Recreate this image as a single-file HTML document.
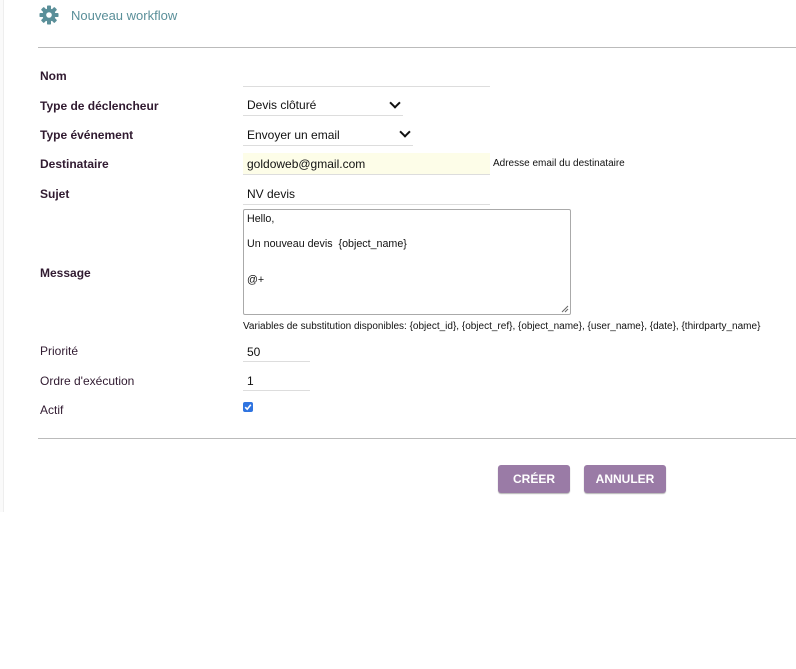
<!DOCTYPE html>
<html><head><meta charset="utf-8"><style>
body{margin:0;width:796px;height:669px;background:#fff;font-family:"Liberation Sans",sans-serif;position:relative;overflow:hidden;color:#2a1a2a}
.a{position:absolute;white-space:nowrap}
.lb{font-size:12px;font-weight:bold;color:#301a30}
.ln{font-size:12px;color:#301a30}
.ul{position:absolute;border-bottom:1px solid #ddd;height:0}
.in{position:absolute;font-size:12px;color:#111}
.chev{position:absolute;width:6px;height:6px;border-right:2px solid #111;border-bottom:2px solid #111;transform:rotate(45deg)}
.btn{position:absolute;background:#9a7ba6;color:#fff;font-weight:bold;font-size:12px;text-align:center;line-height:28px;border-radius:3px;box-shadow:0 1px 1px rgba(0,0,0,.3)}
</style></head><body>
<div style="position:absolute;left:0;top:0;width:3px;height:512px;border-right:1px solid #eee;background:#fafafa"></div>
<svg class="a" style="left:39px;top:5px" width="20" height="20" viewBox="0 0 20 20"><g fill="#5a8f99"><circle cx="10" cy="10" r="6.5"/><g id="t"><rect x="8" y="0.5" width="4" height="4" rx="0.8"/><rect x="8" y="15.5" width="4" height="4" rx="0.8"/></g><use href="#t" transform="rotate(45 10 10)"/><use href="#t" transform="rotate(90 10 10)"/><use href="#t" transform="rotate(135 10 10)"/></g><circle cx="10" cy="10" r="2.8" fill="#fff"/></svg>
<div class="a" style="left:71px;top:8px;font-size:13px;color:#5a8f99">Nouveau workflow</div>
<div style="position:absolute;left:38px;top:47px;width:758px;border-top:1px solid #bbb"></div>

<div class="a lb" style="left:40px;top:69px">Nom</div>
<div class="ul" style="left:243px;top:86px;width:247px"></div>

<div class="a lb" style="left:40px;top:99px">Type de déclencheur</div>
<div class="in" style="left:247px;top:98px">Devis clôturé</div>
<div class="chev" style="left:391px;top:99px"></div>
<div class="ul" style="left:243px;top:115px;width:160px"></div>

<div class="a lb" style="left:40px;top:128px">Type événement</div>
<div class="in" style="left:247px;top:128px">Envoyer un email</div>
<div class="chev" style="left:401px;top:128px"></div>
<div class="ul" style="left:243px;top:145px;width:170px"></div>

<div class="a lb" style="left:40px;top:157px">Destinataire</div>
<div style="position:absolute;left:243px;top:153px;width:247px;height:21px;background:#fdfde8;border-bottom:1px solid #ddd"></div>
<div class="in" style="left:247px;top:157px">goldoweb@gmail.com</div>
<div class="a" style="left:493px;top:158px;font-size:10px;color:#111">Adresse email du destinataire</div>

<div class="a lb" style="left:40px;top:187px">Sujet</div>
<div class="in" style="left:247px;top:187px">NV devis</div>
<div class="ul" style="left:243px;top:204px;width:247px"></div>

<div class="a lb" style="left:40px;top:266px">Message</div>
<div style="position:absolute;left:243px;top:209px;width:326px;height:104px;border:1px solid #aaa;border-radius:2px"></div>
<div class="a" style="left:247px;top:213px;font-size:10.7px;color:#111;line-height:12.3px">Hello,<br><br>Un nouveau devis&nbsp; {object_name}<br><br><br>@+</div>
<svg class="a" style="left:561px;top:305px" width="8" height="8"><path d="M1 7L7 1M4 7L7 4" stroke="#666" stroke-width="1"/></svg>
<div class="a" style="left:243px;top:321px;font-size:10px;color:#111">Variables de substitution disponibles: {object_id}, {object_ref}, {object_name}, {user_name}, {date}, {thirdparty_name}</div>

<div class="a ln" style="left:40px;top:344px">Priorité</div>
<div class="in" style="left:247px;top:345px">50</div>
<div class="ul" style="left:243px;top:361px;width:67px"></div>
<div class="a ln" style="left:40px;top:374px">Ordre d'exécution</div>
<div class="in" style="left:247px;top:374px">1</div>
<div class="ul" style="left:243px;top:390px;width:67px"></div>
<div class="a ln" style="left:40px;top:403px">Actif</div>
<div style="position:absolute;left:243px;top:402px;width:10px;height:10px;background:#2f74e0;border-radius:2px"></div>
<svg class="a" style="left:243px;top:402px" width="10" height="10"><path d="M2.2 5.2L4.2 7.2L7.8 2.8" stroke="#fff" stroke-width="1.6" fill="none"/></svg>

<div style="position:absolute;left:38px;top:438px;width:758px;border-top:1px solid #bbb"></div>
<div class="btn" style="left:498px;top:465px;width:72px">CRÉER</div>
<div class="btn" style="left:584px;top:465px;width:82px">ANNULER</div>
</body></html>
